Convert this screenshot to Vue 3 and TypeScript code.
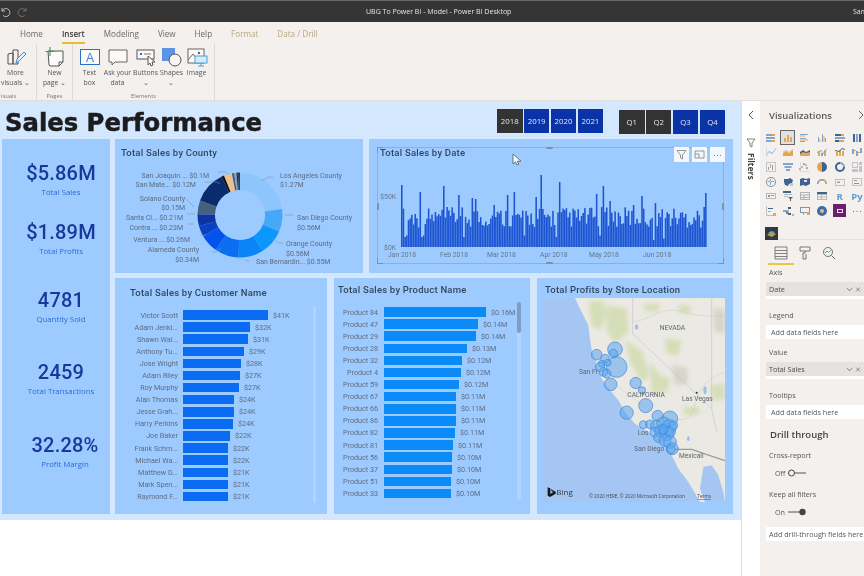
<script setup lang="ts">
interface Kpi { value: string; label: string; gap: number; shift: number }
interface BarRow { name: string; width: number; value: string }
interface Seg { from: number; to: number; color: string }
interface VizIcon { paths: [string, string][]; text?: string; textColor?: string; selected?: boolean; tile?: string }

const tabs = ['Home', 'Insert', 'Modeling', 'View', 'Help', 'Format', 'Data / Drill']
const years = [
  { label: '2018', on: false },
  { label: '2019', on: true },
  { label: '2020', on: true },
  { label: '2021', on: true },
]
const quarters = [
  { label: 'Q1', on: false },
  { label: 'Q2', on: false },
  { label: 'Q3', on: true },
  { label: 'Q4', on: true },
]

const kpis: Kpi[] = [
  { value: '$5.86M', label: 'Total Sales', gap: 21, shift: 0 },
  { value: '$1.89M', label: 'Total Profits', gap: 21, shift: 0 },
  { value: '4781', label: 'Quantity Sold', gap: 30, shift: 0 },
  { value: '2459', label: 'Total Transactions', gap: 34, shift: 0 },
  { value: '32.28%', label: 'Profit Margin', gap: 35, shift: 2 },
]

const customers: BarRow[] = [
  { name: 'Victor Scott', width: 85, value: '$41K' },
  { name: 'Adam Jenki...', width: 67, value: '$32K' },
  { name: 'Shawn Wal...', width: 65, value: '$31K' },
  { name: 'Anthony Tu...', width: 61, value: '$29K' },
  { name: 'Jose Wright', width: 58, value: '$28K' },
  { name: 'Adam Riley', width: 57, value: '$27K' },
  { name: 'Roy Murphy', width: 56, value: '$27K' },
  { name: 'Alan Thomas', width: 51, value: '$24K' },
  { name: 'Jesse Grah...', width: 51, value: '$24K' },
  { name: 'Harry Perkins', width: 50, value: '$24K' },
  { name: 'Joe Baker', width: 47, value: '$22K' },
  { name: 'Frank Schm...', width: 45, value: '$22K' },
  { name: 'Michael Wa...', width: 45, value: '$22K' },
  { name: 'Matthew D...', width: 45, value: '$21K' },
  { name: 'Mark Spen...', width: 45, value: '$21K' },
  { name: 'Raymond F...', width: 45, value: '$21K' },
]

const products: BarRow[] = [
  { name: 'Product 84', width: 102, value: '$0.16M' },
  { name: 'Product 47', width: 94, value: '$0.14M' },
  { name: 'Product 29', width: 92, value: '$0.14M' },
  { name: 'Product 28', width: 83, value: '$0.13M' },
  { name: 'Product 32', width: 78, value: '$0.12M' },
  { name: 'Product 4', width: 77, value: '$0.12M' },
  { name: 'Product 59', width: 75, value: '$0.12M' },
  { name: 'Product 67', width: 72, value: '$0.11M' },
  { name: 'Product 66', width: 72, value: '$0.11M' },
  { name: 'Product 86', width: 72, value: '$0.11M' },
  { name: 'Product 82', width: 71, value: '$0.11M' },
  { name: 'Product 81', width: 69, value: '$0.11M' },
  { name: 'Product 56', width: 68, value: '$0.10M' },
  { name: 'Product 37', width: 68, value: '$0.10M' },
  { name: 'Product 51', width: 67, value: '$0.10M' },
  { name: 'Product 33', width: 67, value: '$0.10M' },
]

// donut sits at 125,76 in card coordinates
const segs: Seg[] = [
  { from: 0, to: 82, color: '#8cc6fb' },
  { from: 82, to: 113, color: '#47a8f8' },
  { from: 113, to: 148, color: '#0c97fb' },
  { from: 148, to: 182, color: '#0a84f6' },
  { from: 182, to: 215, color: '#0a6ef0' },
  { from: 215, to: 240, color: '#0452ec' },
  { from: 240, to: 255, color: '#0c40c4' },
  { from: 255, to: 271, color: '#0c34a4' },
  { from: 271, to: 290, color: '#47607c' },
  { from: 290, to: 334, color: '#0b2c6c' },
  { from: 334, to: 338, color: '#11151f' },
  { from: 338, to: 349, color: '#efc08c' },
  { from: 349, to: 352, color: '#2e5f88' },
  { from: 352, to: 355, color: '#8aa0b5' },
  { from: 355, to: 357, color: '#1c3a5c' },
  { from: 357, to: 360, color: '#2a3f55' },
]

const polar = (r: number, deg: number) => {
  const a = ((deg - 90) * Math.PI) / 180
  return `${(125 + r * Math.cos(a)).toFixed(2)} ${(76 + r * Math.sin(a)).toFixed(2)}`
}

const segPath = (s: Seg) => {
  const large = s.to - s.from > 180 ? 1 : 0
  return `M${polar(42.5, s.from)}A42.5 42.5 0 ${large} 1 ${polar(42.5, s.to)}L${polar(25, s.to)}A25 25 0 ${large} 0 ${polar(25, s.from)}Z`
}

const donutLabels = [
  { x: 165, y: 39, t: 'Los Angeles County' },
  { x: 165, y: 48, t: '$1.27M' },
  { x: 182, y: 81, t: 'San Diego County' },
  { x: 182, y: 91, t: '$0.56M' },
  { x: 171, y: 107, t: 'Orange County' },
  { x: 171, y: 117, t: '$0.56M' },
  { x: 141, y: 125, t: 'San Bernardin... $0.55M' },
]
const donutLabelsLeft = [
  { x: 94, y: 39, t: 'San Joaquin ... $0.1M' },
  { x: 81, y: 48, t: 'San Mate... $0.12M' },
  { x: 70, y: 62, t: 'Solano County' },
  { x: 70, y: 71, t: '$0.15M' },
  { x: 68, y: 81, t: 'Santa Cl... $0.21M' },
  { x: 68, y: 91, t: 'Contra ... $0.23M' },
  { x: 75, y: 103, t: 'Ventura ... $0.26M' },
  { x: 84, y: 113, t: 'Alameda County' },
  { x: 84, y: 123, t: '$0.34M' },
]

const peaks: Record<number, number> = {
  0: 62, 11: 55, 25: 61, 34: 52, 42: 49, 44: 48, 55: 42, 63: 52, 67: 55, 80: 50, 83: 72, 94: 65,
  116: 53, 120: 61, 124: 46, 138: 42, 143: 51, 151: 44, 181: 54, 180: 40,
}
const lows = [2, 3, 12, 13, 37, 73, 92, 118, 150, 156]

const dailySales = Array.from({ length: 182 }, (_, i) => {
  if (peaks[i]) return peaks[i]
  if (lows.includes(i)) return 7 + (i % 5) * 1.5
  const r = Math.abs(Math.sin(i * 12.9898) * 43758.5453) % 1
  return 19 + r * 21
})

const bubbles = [
  [240, 222, 22], [185, 238, 16], [235, 235, 13], [210, 250, 13], [245, 275, 31], [200, 265, 10],
  [195, 275, 14], [218, 262, 10], [205, 290, 13], [215, 295, 13], [227, 327, 19], [302, 323, 17],
  [321, 345, 11], [332, 391, 21], [275, 412, 20], [368, 422, 17], [405, 430, 23], [325, 448, 12],
  [345, 447, 13], [365, 452, 18], [385, 445, 20], [402, 455, 22], [360, 470, 15], [378, 468, 19],
  [395, 475, 21], [370, 487, 14], [405, 470, 16], [390, 495, 18], [405, 500, 19], [412, 520, 18],
  [408, 522, 13], [385, 462, 14], [415, 450, 13],
]

const blue = '#7fa6cc'
const orange = '#e9a54e'
const grey = '#8f9296'
const navy = '#3f6390'

const vizIcons: VizIcon[] = [
  { paths: [['M1 2h6v2H1zM1 5h9v2H1zM1 8h5v2H1z', blue], ['M7 2h3v2H7zM6 8h4v2H6z', orange]] },
  { selected: true, paths: [['M2 6h2v4H2zM5 3h2v7H5zM8 5h2v5H8z', orange]] },
  { paths: [['M1 2h8v1H1zM1 6h6v1H1zM1 9h5v1H1z', blue], ['M1 3.5h5v1H1zM1 7.5h8v1H1z', orange]] },
  { paths: [['M2 5h1v5H2zM6 2h1v8H6zM9 6h1v4H9z', blue], ['M3.5 7h1v3h-1zM7.5 4h1v6h-1z', orange]] },
  { paths: [['M1 2h6v2H1zM1 8h4v2H1z', navy], ['M7 2h3v2H7zM5 8h5v2H5z', orange], ['M1 5h10v2H1z', blue]] },
  { paths: [['M2 2h2v8H2z', navy], ['M5 2h2v8H5z', blue], ['M8 2h2v8H8z', navy]] },
  { paths: [['M1 9L4 5l3 2 4-5v1L7 8 4 6 1 10z', blue], ['M1 1h.6v10H1z', '#c9cbce']] },
  { paths: [['M1 10V7l3-2 3 2 4-3v6z', orange], ['M1 6l3-2 3 2 4-3v.6L7 6.6 4 4.6 1 6.6z', blue]] },
  { paths: [['M1 10V6l3-2 3 2 4-2v6z', navy], ['M1 10V8l3-2 3 1 4-1v4z', orange]] },
  { paths: [['M2 5h2v5H2zM8 4h2v6H8z', orange], ['M5 7h2v3H5z', blue], ['M1 6l4-2 3 3 3-5v1L8 8 5 5 1 7z', blue]] },
  { paths: [['M2 6h2v4H2zM5 4h2v6H5zM8 5h2v5H8z', orange], ['M1 4l4 1 3-3 3 1v1L8 3 5 6 1 5z', navy]] },
  { paths: [['M1 3h2v5H1zM5 5h2v5H5zM9 2h2v5H9z', blue], ['M3 4h2v1H3zM7 6h2v1H7z', orange]] },
  { paths: [['M1 1h10v10H1zM2 2v8h8V2z', '#c3c5c8'], ['M3 6h1v3H3zM7 4h1v5H7z', blue], ['M5 3h1v4H5z', orange]] },
  { paths: [['M1 2h10v2H1z', blue], ['M2.5 5h7v2h-7z', blue], ['M4 8h4v2H4z', blue]] },
  { paths: [['M2 8a1 1 0 100 .1zM6 3a1 1 0 100 .1zM9 7a1 1 0 100 .1z', blue], ['M4 6a1 1 0 100 .1zM8 4a1 1 0 100 .1z', orange], ['M1 1h.5v10H1zM1 10.5h10v.5H1z', '#c3c5c8']] },
  { paths: [['M6 1a5 5 0 000 10V6z', orange], ['M6 1a5 5 0 015 5 5 5 0 01-5 5V6z', navy]] },
  { paths: [['M6 1a5 5 0 015 5H9a3 3 0 00-3-3z', blue], ['M11 6a5 5 0 01-5 5 5 5 0 01-5-5 5 5 0 015-5v2a3 3 0 103 3z', navy]] },
  { paths: [['M1 1h6v6H1zM8 1h3v3H8zM8 5h3v6H8zM1 8h6v3H1z', '#c0c3c7'], ['M2 2h4v4H2z', '#eef0f2']] },
  { paths: [['M6 1a5 5 0 110 10A5 5 0 016 1zm0 1a4 4 0 100 8 4 4 0 000-8z', grey], ['M3 5h6v1H3zM5 3h1v6H5z', blue]] },
  { paths: [['M2 3h4l2-1 3 2-1 3-3 1-1 2-3-1-1-3z', navy], ['M8 7h3v3H8z', '#c3c5c8']] },
  { paths: [['M1 3l3-1 3 1 4-1v6l-4 2-3-1-3 1z', navy], ['M5 4h3v2H5z', '#dde3ea']] },
  { paths: [['M1 8a5 5 0 0110 0H9.5a3.5 3.5 0 00-7 0z', grey], ['M8 3.5a5 5 0 013 4.5H9.5A3.5 3.5 0 008 5z', orange]] },
  { paths: [['M1 3h10v7H1zM2 4v5h8V4z', '#c0c3c7'], ['M3 5.5h3v1.5H3z', '#9fa3a8']] },
  { paths: [['M1 2h10v8H1zM2 3v6h8V3z', '#c0c3c7'], ['M3 4h3v1H3zM3 7h5v1H3z', grey]] },
  { paths: [['M1 3h10v6H1zM2 4v4h8V4z', '#b6b9bd'], ['M3 5h2v2H3zM6 5h3v1H6z', grey]] },
  { paths: [['M1 1h8v2H1z', navy], ['M2 4h8v1H2zM2 6h4v1H2z', '#b6b9bd'], ['M6 7h5l-2 2v2H8V9z', '#5c5f63']] },
  { paths: [['M1 2h10v8H1zM2 3v1.5h8V3zM2 5.5V7h2.5V5.5zM5.5 5.5V7H10V5.5zM2 8v1h2.5V8zM5.5 8v1H10V8z', '#b0b4b8']] },
  { paths: [['M1 2h10v2H1z', navy], ['M1 4h10v6H1zM2 5v1.5h3V5zM6 5v1.5h4V5zM2 7.5V9h3V7.5zM6 7.5V9h4V7.5z', '#b6b9bd']] },
  { paths: [], text: 'R', textColor: '#5f9bd8' },
  { paths: [], text: 'Py', textColor: '#5f9bd8' },
  { paths: [['M1 1h.7v10H1zM1 10.3h8v.7H1z', '#a9acb0'], ['M3 3h5v1H3z', navy], ['M3 6h3v1H3z', orange], ['M8 8h3v3H8z', orange]] },
  { paths: [['M1 5h3v2H1z', blue], ['M6 2h3v2H6zM6 8h3v2H6z', navy], ['M4 5.5h2V3h.5v6H4z', '#7c8085'], ['M10 9h2v2h-2z', orange]] },
  { paths: [['M1 2h10v6H6l-2 2V8H1zM2 3v4h3v1l1-1h4V3z', '#7f96b3'], ['M8 7h3v3H8z', orange]] },
  { paths: [['M6 1a5 5 0 110 10A5 5 0 016 1z', '#3a6ea5'], ['M6 4a2 2 0 110 4 2 2 0 010-4z', '#e9b87a']] },
  { tile: '#6a1f6e', paths: [['M3 4h6v4H3zM4 5v2h4V5z', '#f1d9f2']] },
  { paths: [['M2 6h1v1H2zM5.5 6h1v1h-1zM9 6h1v1H9z', '#6d7074']] },
]
</script>

<template>
  <div class="app">
    <div class="titlebar">
      <div class="undo">
        <svg width="12" height="12" viewBox="0 0 12 12"><path d="M3 2v3h3M3.2 5a4 4 0 1 1 1 4.5" fill="none" stroke="#bdbdbd" stroke-width="1" /></svg>
        <svg width="12" height="12" viewBox="0 0 12 12"><path d="M9 2v3H6M8.8 5a4 4 0 1 0-1 4.5" fill="none" stroke="#6f6f6f" stroke-width="1" /></svg>
      </div>
      <span class="doc-title">UBG To Power BI - Model - Power BI Desktop</span>
      <span class="user">Sam</span>
    </div>

    <div class="tabs">
      <span
        v-for="t in tabs"
        :key="t"
        class="tab"
        :class="{ active: t === 'Insert', tool: t === 'Format' || t === 'Data / Drill' }"
      >{{ t }}</span>
    </div>

    <div class="ribbon">
      <div class="group group-visuals">
        <div class="tools">
          <div class="tool-btn">
            <svg width="22" height="22" viewBox="0 0 22 22"><path d="M3 8l5-1v11H3zM8 4h5v14H8z" fill="none" stroke="#555" /><path d="M11 17l1-4 7-7 2 2-7 7z" fill="#e8f1fb" stroke="#3f8fd8" /></svg>
            <span>More<br />visuals ⌄</span>
          </div>
        </div>
        <div class="group-name">isuals</div>
      </div>
      <div class="group group-pages">
        <div class="tools">
          <div class="tool-btn">
            <svg width="22" height="22" viewBox="0 0 22 22"><path d="M4 5h15v11l-4 4H6l-1-1z" fill="#fbfaf9" stroke="#555" /><path d="M15 20v-4h4" fill="none" stroke="#555" /><path d="M6 1v9M1.500 5.500h9" stroke="#2f9e55" stroke-width="1.100" /></svg>
            <span>New<br />page ⌄</span>
          </div>
        </div>
        <div class="group-name">Pages</div>
      </div>
      <div class="group group-elements">
        <div class="tools">
          <div class="tool-btn w27">
            <svg width="22" height="22" viewBox="0 0 22 22"><rect x="1.500" y="3.500" width="19" height="15" fill="#fbfaf9" stroke="#2b6fc6" /><text x="11" y="15.500" text-anchor="middle" class="svg-a">A</text></svg>
            <span>Text<br />box</span>
          </div>
          <div class="tool-btn w29">
            <svg width="22" height="22" viewBox="0 0 22 22"><path d="M2 4h18v12H8l-3 3v-3H2z" fill="#fbfaf9" stroke="#666" /></svg>
            <span>Ask your<br />data</span>
          </div>
          <div class="tool-btn w27">
            <svg width="22" height="22" viewBox="0 0 22 22"><rect x="2" y="4" width="17" height="9" fill="#fbfaf9" stroke="#555" /><path d="M5 7h2v2H5z" fill="#2b6fc6" /><path d="M9 8h7" stroke="#777" /><path d="M13 10v9l2-2 1 3 2-1-1-3h3z" fill="#fff" stroke="#555" /></svg>
            <span>Buttons<br />⌄</span>
          </div>
          <div class="tool-btn w25">
            <svg width="22" height="22" viewBox="0 0 22 22"><rect x="1" y="2" width="13" height="13" fill="#5b94e4" /><circle cx="14" cy="14" r="6" fill="#f7f5f3" stroke="#555" /></svg>
            <span>Shapes<br />⌄</span>
          </div>
          <div class="tool-btn w25">
            <svg width="22" height="22" viewBox="0 0 22 22"><rect x="2" y="3" width="16" height="14" fill="#fbfaf9" stroke="#666" /><path d="M2 14l5-6 4 5" fill="none" stroke="#666" /><circle cx="13" cy="7" r="1.200" fill="#666" /><rect x="9" y="10" width="12" height="7" fill="#d7ebfb" stroke="#4aa0d8" /><path d="M15 17v3M12 20h6" stroke="#4aa0d8" /></svg>
            <span>Image</span>
          </div>
        </div>
        <div class="group-name">Elements</div>
      </div>
    </div>

    <div class="main">
      <div class="canvas">
        <div class="page">
          <div class="page-head">
            <h1 class="page-title">Sales Performance</h1>
            <div class="slicer years">
              <button v-for="y in years" :key="y.label" class="chip" :class="{ on: y.on }">{{ y.label }}</button>
            </div>
            <div class="slicer quarters">
              <button v-for="q in quarters" :key="q.label" class="chip" :class="{ on: q.on }">{{ q.label }}</button>
            </div>
          </div>

          <div class="page-body">
            <div class="card kpis">
              <div
                v-for="k in kpis"
                :key="k.label"
                class="kpi"
                :style="{ marginTop: k.gap + 'px', paddingLeft: k.shift * 2 + 'px' }"
              >
                <div class="kpi-value">{{ k.value }}</div>
                <div class="kpi-label">{{ k.label }}</div>
              </div>
            </div>

            <div class="visuals">
              <div class="row-top">
                <div class="card county">
                  <div class="card-title county-title">Total Sales by County</div>
                  <svg class="county-svg" width="248" height="110" viewBox="0 24 248 110">
                    <path v-for="(s, i) in segs" :key="i" :d="segPath(s)" :fill="s.color" />
                    <g fill="none" stroke="#7f93ab" stroke-width=".6">
                      <path d="M158 38l-4 0-8 4M178 76h-8M168 104l-5 0-6-6M134 122l-4-1M103 33h8l3 3M90 43h12l3 2M71 60l8 8M72 75h8M72 85h7M85 96h6M97 113h4l5-4" />
                    </g>
                    <g class="donut-text">
                      <text v-for="l in donutLabels" :key="l.t + l.y" :x="l.x" :y="l.y">{{ l.t }}</text>
                      <text v-for="l in donutLabelsLeft" :key="l.t + l.y" :x="l.x" :y="l.y" text-anchor="end">{{ l.t }}</text>
                    </g>
                  </svg>
                </div>

                <div class="card bydate">
                  <div class="card-title date-title">Total Sales by Date</div>
                  <svg class="date-svg" width="364" height="112" viewBox="0 22 364 112">
                    <rect
                      v-for="(v, i) in dailySales"
                      :key="i"
                      :x="32 + i * 1.68"
                      :y="108 - v"
                      width="1.550"
                      :height="v"
                      fill="#1c54d2"
                    />
                    <g class="axis-text">
                      <text x="27" y="60" text-anchor="end">$50K</text>
                      <text x="27" y="111" text-anchor="end">$0K</text>
                      <text x="19" y="118">Jan 2018</text>
                      <text x="71" y="118">Feb 2018</text>
                      <text x="118" y="118">Mar 2018</text>
                      <text x="171" y="118">Apr 2018</text>
                      <text x="220" y="118">May 2018</text>
                      <text x="274" y="118">Jun 2018</text>
                    </g>
                  </svg>

                  <div class="frame">
                    <i class="corner tl"></i><i class="corner tr"></i><i class="corner bl"></i><i class="corner br"></i>
                    <i class="handle top"></i><i class="handle bottom"></i><i class="handle left"></i><i class="handle right"></i>
                  </div>
                  <div class="actions">
                    <span class="action">
                      <svg width="11" height="11" viewBox="0 0 11 11"><path d="M1 1.500h9L6.500 6v4l-2-1V6z" fill="none" stroke="#7d7f82" stroke-width=".8" /></svg>
                    </span>
                    <span class="action">
                      <svg width="11" height="11" viewBox="0 0 11 11"><path d="M1 2h9v7H1zM1 5h4v4" fill="none" stroke="#7d7f82" stroke-width=".8" /></svg>
                    </span>
                    <span class="action dots">···</span>
                  </div>
                  <svg class="cursor" width="10" height="13" viewBox="0 0 10 13"><path d="M1 1v10l2.500-2.200L5 12l1.800-.8-1.500-3H9z" fill="#f6f7f8" stroke="#4e5a6a" stroke-width=".8" /></svg>
                </div>
              </div>

              <div class="row-bottom">
                <div class="card list customers">
                  <div class="card-title list-title">Total Sales by Customer Name</div>
                  <div class="bars">
                    <div v-for="c in customers" :key="c.name" class="bar-row">
                      <span class="bar-name">{{ c.name }}</span>
                      <span class="bar" :style="{ width: c.width + 'px' }"></span>
                      <span class="bar-value">{{ c.value }}</span>
                    </div>
                  </div>
                  <div class="scroll"></div>
                </div>

                <div class="card list products">
                  <div class="card-title list-title">Total Sales by Product Name</div>
                  <div class="bars">
                    <div v-for="p in products" :key="p.name" class="bar-row">
                      <span class="bar-name">{{ p.name }}</span>
                      <span class="bar" :style="{ width: p.width + 'px' }"></span>
                      <span class="bar-value">{{ p.value }}</span>
                    </div>
                  </div>
                  <div class="scroll"><i class="thumb"></i></div>
                </div>

                <div class="card mapcard">
                  <div class="card-title map-title">Total Profits by Store Location</div>
                  <svg class="map" width="181" height="204" viewBox="27 68 543 612">
                    <defs>
                      <filter id="soft" x="-10%" y="-10%" width="120%" height="120%"><feGaussianBlur stdDeviation="7" /></filter>
                    </defs>
                    <rect x="27" y="68" width="543" height="612" fill="#a5c6f3" />
                    <path d="M120 68L135 100L160 150L165 190L170 225L185 265L200 310L225 345L250 375L270 410L300 445L340 470L385 500L410 540L430 580L460 620L495 680H570V68Z" fill="#ebe9e3" />
                    <path d="M505 575L530 570L550 600L565 650L570 680H510L495 640Z" fill="#a5c6f3" />
                    <g fill="#d5deb8" filter="url(#soft)">
                      <path d="M160 80L205 75L215 120L195 165L170 150Z" />
                      <path d="M215 90L275 100L280 170L240 205L215 165Z" />
                      <path d="M270 195L320 225L345 300L320 320L285 260Z" />
                      <path d="M345 260L375 300L385 360L350 350Z" />
                      <path d="M390 190L440 195L430 240L395 235Z" />
                      <path d="M370 300L405 310L400 350L375 345Z" />
                      <path d="M445 395L495 395L490 420L450 420Z" />
                      <path d="M525 330L570 325L570 370L535 375Z" />
                      <path d="M325 85L375 85L370 110L330 108Z" />
                      <path d="M430 90L470 92L465 115L432 112Z" />
                    </g>
                    <g fill="#d8d5ca" filter="url(#soft)">
                      <path d="M410 270L455 275L460 325L420 330Z" />
                      <path d="M535 100L570 100L570 175L540 170Z" />
                    </g>
                    <g fill="none" stroke="#bdbcb9" stroke-width="1.500">
                      <path d="M293 68V175L530 400M530 68V400L545 470" />
                      <path d="M293 140C350 130 360 110 400 105S470 130 570 120" stroke="#c9c7c1" />
                      <path d="M190 290C260 340 350 420 410 430S470 420 485 370S540 300 570 290" stroke="#cdcbc5" />
                    </g>
                    <path d="M420 522L470 522L570 556" fill="none" stroke="#9d9b96" stroke-width="4" />
                    <g fill="#9fbde6">
                      <ellipse cx="305" cy="155" rx="5" ry="8" />
                      <ellipse cx="510" cy="345" rx="5" ry="12" />
                      <ellipse cx="460" cy="490" rx="4" ry="7" />
                    </g>
                    <circle cx="485" cy="352" r="3" fill="#333" />
                    <circle
                      v-for="(b, i) in bubbles"
                      :key="i"
                      :cx="b[0]"
                      :cy="b[1]"
                      :r="b[2]"
                      fill="#5ba6f0"
                      fill-opacity=".55"
                      stroke="#3a86da"
                      stroke-width="2"
                    />
                    <g class="map-text">
                      <text x="374" y="165">NEVADA</text>
                      <text x="132" y="296">San Fr</text>
                      <text x="277" y="365">CALIFORNIA</text>
                      <text x="441" y="377">Las Vegas</text>
                      <text x="308" y="480">Los</text>
                      <text x="298" y="528">San Diego</text>
                      <text x="432" y="549">Mexicali</text>
                    </g>
                    <path d="M38 636l8 3v17l9-6-6-3-1-5 14 7v6l-17 10-7-4z" fill="#141a22" />
                    <text x="64" y="659" class="bing">Bing</text>
                    <text x="162" y="668" class="copy">© 2020 HERE, © 2020 Microsoft Corporation</text>
                    <text x="487" y="668" class="copy terms">Terms</text>
                  </svg>
                </div>
              </div>
            </div>
          </div>
        </div>
        <div class="below"></div>
      </div>

      <div class="filters">
        <svg class="chev" width="8" height="10" viewBox="0 0 8 10"><path d="M6 1L2 5l4 4" fill="none" stroke="#555" /></svg>
        <svg class="funnel" width="10" height="10" viewBox="0 0 10 10"><path d="M1 1h8L6 5v4L4 8V5z" fill="none" stroke="#666" stroke-width=".8" /></svg>
        <span class="filters-text">Filters</span>
      </div>

      <aside class="viz">
        <div class="viz-head">
          <span class="viz-title">Visualizations</span>
          <svg width="6" height="10" viewBox="0 0 6 10"><path d="M1 1l4 4-4 4" fill="none" stroke="#666" /></svg>
        </div>

        <div class="viz-grid">
          <span v-for="(v, i) in vizIcons" :key="i" class="viz-icon" :class="{ selected: v.selected }" :style="v.tile ? { background: v.tile } : undefined">
            <svg v-if="!v.text" width="12" height="12" viewBox="0 0 12 12">
              <path v-for="(p, j) in v.paths" :key="j" :d="p[0]" :fill="p[1]" fill-rule="evenodd" />
            </svg>
            <span v-else class="viz-letter" :style="{ color: v.textColor }">{{ v.text }}</span>
          </span>
        </div>

        <div class="custom-row">
          <svg width="13" height="13" viewBox="0 0 13 13"><rect width="13" height="13" fill="#2d3a40" /><path d="M2 8l4-3 5 2-4 3z" fill="#c99a4e" /><path d="M3 6l3-2 4 1-3 2z" fill="#5fa8b8" /></svg>
        </div>

        <div class="pane-tabs">
          <span class="pane-tab active">
            <svg width="14" height="14" viewBox="0 0 14 14"><path d="M1 1h12v12H1zM1 4.500h12M1 7.500h12M1 10.500h12" fill="none" stroke="#666" stroke-width=".8" /></svg>
          </span>
          <span class="pane-tab">
            <svg width="14" height="14" viewBox="0 0 14 14"><path d="M2 1h10v4H2zM7 5v2H5v6h3V8" fill="none" stroke="#666" stroke-width=".9" /></svg>
          </span>
          <span class="pane-tab">
            <svg width="14" height="14" viewBox="0 0 14 14"><circle cx="6" cy="6" r="4.500" fill="none" stroke="#666" stroke-width=".9" /><path d="M9.500 9.500L13 13" stroke="#666" /><path d="M3 7l2-2 1.500 1.500L9 4" fill="none" stroke="#3f8f5a" stroke-width=".8" /></svg>
          </span>
        </div>

        <div class="fields">
          <div class="field-label first">Axis</div>
          <div class="well filled">
            <span>Date</span>
            <svg width="15" height="7" viewBox="0 0 15 7"><path d="M1 2l2.500 3L6 2M10 1.500l4 4M14 1.500l-4 4" fill="none" stroke="#777" stroke-width=".8" /></svg>
          </div>
          <div class="field-label after-filled">Legend</div>
          <div class="well">Add data fields here</div>
          <div class="field-label">Value</div>
          <div class="well filled">
            <span>Total Sales</span>
            <svg width="15" height="7" viewBox="0 0 15 7"><path d="M1 2l2.500 3L6 2M10 1.500l4 4M14 1.500l-4 4" fill="none" stroke="#777" stroke-width=".8" /></svg>
          </div>
          <div class="field-label after-filled">Tooltips</div>
          <div class="well">Add data fields here</div>
          <div class="drill">Drill through</div>
          <div class="field-label cross">Cross-report</div>
          <div class="toggle">
            <span>Off</span>
            <svg width="20" height="8" viewBox="0 0 20 8"><path d="M8 4h11" stroke="#555" /><circle cx="4.500" cy="4" r="3" fill="none" stroke="#444" /></svg>
          </div>
          <div class="field-label keep">Keep all filters</div>
          <div class="toggle">
            <span>On</span>
            <svg width="20" height="8" viewBox="0 0 20 8"><path d="M1 4h12" stroke="#555" /><circle cx="15.500" cy="4" r="3.200" fill="#444" /></svg>
          </div>
          <div class="well drill-well">Add drill-through fields here</div>
        </div>
      </aside>
    </div>
  </div>
</template>

<style>
html,
body {
  margin: 0;
  background: #fff;
  overflow: hidden;
}
</style>

<style scoped>
.app {
  width: 864px;
  height: 576px;
  display: flex;
  flex-direction: column;
  overflow: hidden;
  background: #fff;
  font-family: "Open Sans", "Liberation Sans", sans-serif;
  filter: blur(0.35px);
}

.titlebar {
  height: 21px;
  flex-shrink: 0;
  background: #353535;
  border-top: 1px solid #6a6a6a;
  display: flex;
  align-items: center;
  box-sizing: content-box;
  color: #e4e4e4;
  font-size: 7px;
}

.undo {
  width: 367px;
  display: flex;
  gap: 6px;
  margin-left: -1px;
  flex-shrink: 0;
}

.doc-title {
  flex: 1;
}

.user {
  width: 11px;
  white-space: nowrap;
  overflow: hidden;
}

.tabs {
  height: 22px;
  flex-shrink: 0;
  background: #f3f0ee;
  display: flex;
  align-items: center;
  padding-left: 20px;
  gap: 19px;
  font-size: 8.100px;
  color: #6a6a6a;
}

.tab {
  position: relative;
}

.tab.active {
  color: #3c3c3c;
  font-weight: 600;
}

.tab.active::after {
  content: "";
  position: absolute;
  left: 0;
  right: 0;
  bottom: -5px;
  height: 2px;
  background: #efb92e;
}

.tab.tool {
  color: #b9a781;
}

.ribbon {
  height: 57px;
  flex-shrink: 0;
  background: #f3f0ee;
  border-bottom: 1px solid #e2dfdd;
  box-sizing: border-box;
  display: flex;
}

.group {
  display: flex;
  flex-direction: column;
  border-right: 1px solid #dcd9d6;
  box-sizing: border-box;
}

.group-visuals { width: 37px; }
.group-pages { width: 36px; }
.group-elements { width: 142px; }

.tools {
  flex: 1;
  display: flex;
  justify-content: center;
  padding-top: 2px;
}

.group-visuals .tools {
  justify-content: flex-start;
  padding-left: 1px;
}

.group-elements .tools {
  justify-content: flex-start;
  padding-left: 3px;
}

.tool-btn {
  display: flex;
  flex-direction: column;
  align-items: center;
  font-size: 6.800px;
  line-height: 10px;
  color: #565656;
  text-align: center;
  white-space: nowrap;
}

.w25 { width: 25px; }
.w27 { width: 27px; }
.w29 { width: 29px; }

.svg-a {
  font-family: "Liberation Sans", sans-serif;
  font-size: 12px;
  fill: #3b82d6;
}

.group-name {
  font-size: 5.800px;
  line-height: 8px;
  height: 8px;
  color: #777;
  text-align: center;
}

.group-visuals .group-name {
  text-align: left;
  padding-left: 1px;
}

.main {
  flex: 1;
  display: flex;
  min-height: 0;
}

.canvas {
  width: 742px;
  flex-shrink: 0;
  display: flex;
  flex-direction: column;
  border-right: 1px solid #d4dfee;
  box-sizing: border-box;
}

.page {
  height: 419px;
  background: #d3e7ff;
  padding: 0 8px 0 2px;
  box-sizing: border-box;
}

.below {
  flex: 1;
  background: #fff;
}

.page-head {
  height: 38px;
  display: flex;
  align-items: flex-start;
}

.page-title {
  margin: 5px 0 0 3px;
  width: 492px;
  font-family: "DejaVu Sans", "Liberation Sans", sans-serif;
  font-size: 24.300px;
  line-height: 33px;
  font-weight: 700;
  color: #1c1c1e;
  white-space: nowrap;
  -webkit-text-stroke: 0.5px #1c1c1e;
}

.slicer {
  display: flex;
  gap: 1.400px;
}

.years {
  margin-top: 8px;
  width: 122px;
}

.quarters {
  margin-top: 9px;
}

.chip {
  width: 25.500px;
  height: 24px;
  border: none;
  padding: 0;
  background: #333;
  color: #e6e6e6;
  font-family: "Open Sans", sans-serif;
  font-size: 7.800px;
}

.chip.on {
  background: #0a33a8;
}

.page-body {
  display: flex;
  gap: 5px;
}

.card {
  background: #9ecbff;
  box-sizing: border-box;
  position: relative;
}

.kpis {
  width: 108px;
  height: 375px;
  display: flex;
  flex-direction: column;
}

.kpi {
  text-align: center;
  width: 118px;
}

.kpi-value {
  font-family: Roboto, sans-serif;
  font-weight: 500;
  font-size: 20px;
  line-height: 26px;
  letter-spacing: 0.2px;
  color: #17399c;
}

.kpi-label {
  font-size: 7.800px;
  line-height: 11px;
  margin-top: 1px;
  color: #2a6cd6;
}

.visuals {
  display: flex;
  flex-direction: column;
  gap: 5px;
}

.row-top {
  display: flex;
  gap: 6px;
  height: 134px;
}

.row-bottom {
  display: flex;
  gap: 7px;
  height: 236px;
}

.card-title {
  font-family: Roboto, sans-serif;
  font-weight: 500;
  font-size: 9.500px;
  line-height: 12px;
  letter-spacing: 0.22px;
  color: #33465e;
}

.county {
  width: 248px;
}

.county-title {
  height: 24px;
  padding: 8px 0 0 6px;
  box-sizing: border-box;
}

.county-svg,
.date-svg {
  display: block;
}

.donut-text text {
  font-family: Roboto, sans-serif;
  font-size: 7px;
  fill: #5b6b80;
}

.bydate {
  width: 364px;
}

.date-title {
  height: 22px;
  padding: 8px 0 0 11px;
  box-sizing: border-box;
}

.axis-text text {
  font-family: Roboto, sans-serif;
  font-size: 6.800px;
  fill: #66768a;
}

.frame {
  position: absolute;
  left: 8px;
  top: 8px;
  width: 347px;
  height: 117px;
  border: 1px solid #8fb0d6;
  box-sizing: border-box;
}

.corner {
  position: absolute;
  width: 5px;
  height: 5px;
  border: 0 solid #85909e;
}

.corner.tl { left: -1px; top: -1px; border-width: 1.500px 0 0 1.500px; }
.corner.tr { right: -1px; top: -1px; border-width: 1.500px 1.500px 0 0; }
.corner.bl { left: -1px; bottom: -1px; border-width: 0 0 1.500px 1.500px; }
.corner.br { right: -1px; bottom: -1px; border-width: 0 1.500px 1.500px 0; }

.handle {
  position: absolute;
  background: #85909e;
  border-radius: 1px;
}

.handle.top { top: -1px; left: 168px; width: 7px; height: 2px; }
.handle.bottom { bottom: -1px; left: 168px; width: 7px; height: 2px; }
.handle.left { left: -1px; top: 55px; width: 2px; height: 7px; }
.handle.right { right: -1px; top: 55px; width: 2px; height: 7px; }

.actions {
  position: absolute;
  top: 8px;
  left: 305px;
  display: flex;
  gap: 3px;
}

.action {
  width: 15px;
  height: 15px;
  background: #f4f8fd;
  display: flex;
  align-items: center;
  justify-content: center;
}

.action.dots {
  font-size: 9px;
  color: #6e7175;
  font-family: "Liberation Sans", sans-serif;
}

.cursor {
  position: absolute;
  left: 143px;
  top: 14px;
}

.customers {
  width: 212px;
}

.products {
  width: 196px;
}

.list-title {
  box-sizing: border-box;
}

.customers .list-title {
  height: 31px;
  padding: 9px 0 0 15px;
}

.products .list-title {
  height: 28px;
  padding: 6px 0 0 4px;
}

.bars {
  display: flex;
  flex-direction: column;
}

.bar-row {
  height: 12.100px;
  display: flex;
  align-items: center;
  font-family: Roboto, sans-serif;
  font-size: 7.200px;
  color: #5d6c82;
  white-space: nowrap;
}

.customers .bar-name {
  width: 63px;
  text-align: right;
  margin-right: 5px;
  flex-shrink: 0;
}

.products .bar-name {
  width: 44px;
  text-align: right;
  margin-right: 6px;
  flex-shrink: 0;
}

.bar {
  height: 9.500px;
  flex-shrink: 0;
}

.customers .bar {
  background: #0a6cf3;
}

.products .bar {
  background: #0a8bf7;
}

.bar-value {
  margin-left: 5px;
}

.scroll {
  position: absolute;
  width: 3px;
  background: #afd4fd;
  border-radius: 2px;
}

.customers .scroll {
  left: 198px;
  top: 28px;
  height: 197px;
}

.products .scroll {
  left: 183px;
  top: 24px;
  height: 198px;
  width: 4px;
}

.thumb {
  display: block;
  width: 100%;
  height: 31px;
  background: #7f9dc2;
  border-radius: 2px;
}

.mapcard {
  width: 196px;
}

.map-title {
  height: 20px;
  padding: 6px 0 0 8px;
  box-sizing: border-box;
}

.map {
  display: block;
  margin-left: 7px;
}

.map-text text {
  font-family: Roboto, sans-serif;
  font-size: 20px;
  fill: #5d6670;
}

.bing {
  font-family: "Open Sans", sans-serif;
  font-size: 24px;
  fill: #333a44;
}

.copy {
  font-family: "Open Sans", sans-serif;
  font-size: 14px;
  fill: #3f4854;
}

.terms {
  text-decoration: underline;
}

.filters {
  width: 18px;
  flex-shrink: 0;
  background: #fff;
  display: flex;
  flex-direction: column;
  align-items: center;
  padding-top: 9px;
  box-sizing: border-box;
}

.funnel {
  margin-top: 18px;
}

.filters-text {
  writing-mode: vertical-rl;
  font-size: 8.500px;
  font-weight: 700;
  color: #444;
  margin-top: 5px;
}

.viz {
  flex: 1;
  background: #f3f0ee;
  padding-left: 6px;
  min-width: 0;
}

.viz-head {
  height: 14px;
  margin-top: 7px;
  padding: 0 0 0 3px;
  display: flex;
  align-items: center;
  justify-content: space-between;
}

.viz-title {
  font-size: 9.500px;
  font-weight: 600;
  color: #5c5c5c;
}

.viz-grid {
  margin-top: 9px;
  display: grid;
  grid-template-columns: repeat(6, 17.300px);
  grid-auto-rows: 14.700px;
  margin-left: -2px;
}

.viz-icon {
  width: 13px;
  height: 13px;
  display: flex;
  align-items: center;
  justify-content: center;
  box-sizing: border-box;
}

.viz-icon.selected {
  outline: 1px solid #666;
  background: #e2e0de;
}

.viz-letter {
  font-family: "Open Sans", sans-serif;
  font-weight: 700;
  font-size: 9.500px;
}

.custom-row {
  height: 16px;
  margin-top: 3px;
  border-bottom: 1px solid #e4e1de;
  padding-top: 1px;
  margin-left: -1px;
  box-sizing: content-box;
}

.pane-tabs {
  display: flex;
  height: 24px;
  align-items: center;
  gap: 10px;
  margin-top: 1px;
  padding-left: 8px;
}

.pane-tab {
  position: relative;
  display: flex;
}

.pane-tab.active::after {
  content: "";
  position: absolute;
  left: -6px;
  right: -6px;
  bottom: -5px;
  height: 2px;
  background: #efc43f;
}

.fields {
  font-size: 7.200px;
  color: #585858;
  padding-top: 1px;
}

.field-label {
  height: 12px;
  line-height: 12px;
  margin-top: 7px;
  padding-left: 3px;
}

.field-label.first {
  margin-top: 0;
}

.field-label.after-filled {
  margin-top: 13px;
}

.well {
  height: 14px;
  line-height: 14px;
  margin-top: 4px;
  background: #fff;
  padding-left: 5px;
  white-space: nowrap;
  overflow: hidden;
}

.well.filled {
  display: flex;
  align-items: center;
  justify-content: space-between;
  background: #e5e2e0;
  padding-left: 3px;
  padding-right: 3px;
  color: #4f4f4f;
  box-shadow: 0 3px 0 #fff;
  overflow: visible;
}

.drill {
  margin-top: 9px;
  padding-left: 4px;
  font-size: 9.500px;
  line-height: 14px;
  font-weight: 600;
  color: #444;
}

.field-label.cross {
  margin-top: 7px;
}

.toggle {
  display: flex;
  align-items: center;
  gap: 2px;
  height: 12px;
  margin-top: 6px;
  padding-left: 9px;
}

.field-label.keep {
  margin-top: 9px;
}

.drill-well {
  margin-top: 9px;
  padding-left: 3px;
}
</style>
